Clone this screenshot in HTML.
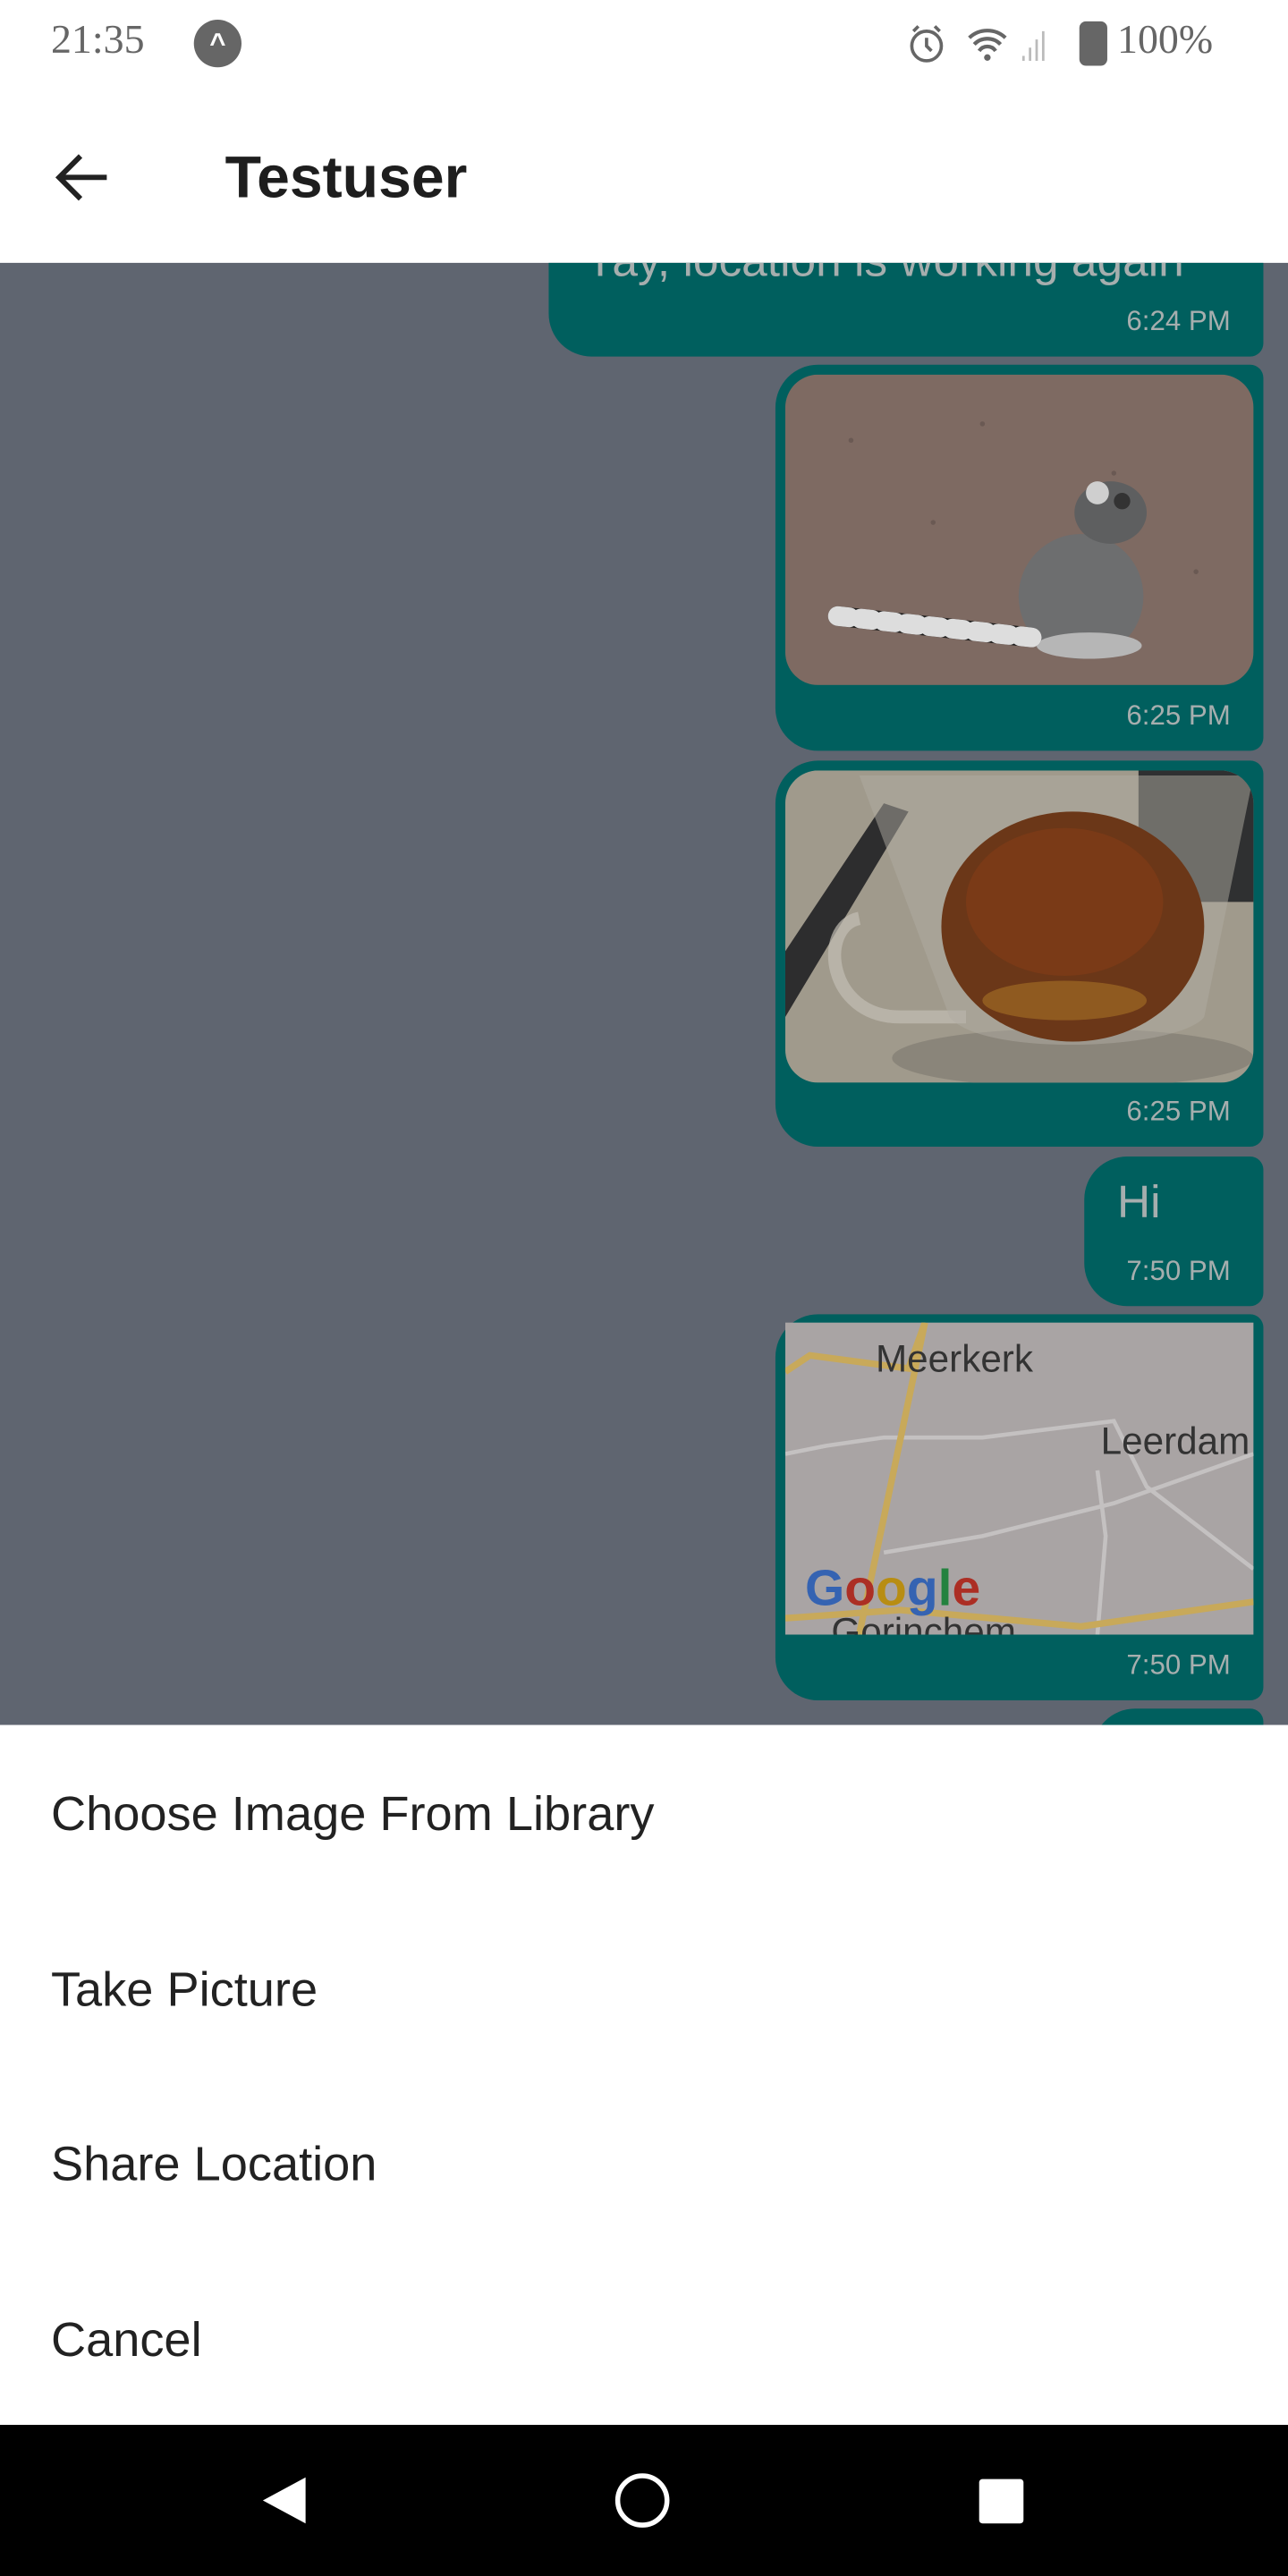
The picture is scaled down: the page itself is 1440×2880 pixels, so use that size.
<!DOCTYPE html>
<html><head><meta charset="utf-8"><style>
*{margin:0;padding:0;box-sizing:border-box}
html,body{width:1440px;height:2880px;overflow:hidden;background:#fff}
#w{position:absolute;left:0;top:0;width:784px;height:1568px;transform:scale(1.836735);transform-origin:0 0;font-family:"Liberation Sans",sans-serif}
.a{position:absolute}
.bub{position:absolute;background:#005f5e;border-radius:8px 8px 8px 26px}
.ts{position:absolute;right:20px;color:#a6aeae;font-size:17px}
.item{position:absolute;left:31px;font-size:29.5px;color:#222}
</style></head><body><div id="w">
<div class="a" style="left:0;top:0;width:784px;height:160px;background:#fff"></div>
<div class="a" style="left:31px;top:11px;font-family:'Liberation Serif',serif;font-size:25px;color:#666">21:35</div>
<div class="a" style="left:118px;top:12px;width:29px;height:29px;border-radius:50%;background:#666;color:#fff;font-size:17px;font-weight:bold;text-align:center;line-height:29px">^</div>
<svg class="a" style="left:550px;top:12px" width="100" height="30" viewBox="0 0 100 30">
<circle cx="14" cy="16" r="9" fill="none" stroke="#666" stroke-width="2"/><path d="M14 11v5l3 3" stroke="#666" stroke-width="2" fill="none"/><path d="M6 7l3-3M22 7l-3-3" stroke="#666" stroke-width="2"/>
<path d="M40 11a16 16 0 0 1 22 0M43 15a11 11 0 0 1 16 0M46 19a6 6 0 0 1 10 0" stroke="#666" stroke-width="2.3" fill="none"/><circle cx="51" cy="23" r="2" fill="#666"/>
<path d="M73 25v-3M77 25v-8M81 25v-13M85 25v-18" stroke="#bbb" stroke-width="1.5"/>
</svg>
<div class="a" style="left:657px;top:13px;width:17px;height:27px;border-radius:4px;background:#666"></div>
<div class="a" style="left:680px;top:11px;font-family:'Liberation Serif',serif;font-size:25px;color:#666">100%</div>
<svg class="a" style="left:33px;top:92px" width="34" height="32" viewBox="0 0 34 32"><path d="M32 16H4M16 3L3 16l13 13" stroke="#222" stroke-width="3.2" fill="none"/></svg>
<div class="a" style="left:137px;top:87px;font-size:36px;font-weight:bold;color:#1e1e1e">Testuser</div>

<div class="a" style="left:0;top:160px;width:784px;height:890px;background:#5f6570;overflow:hidden">
 <div class="bub" style="left:334px;top:-60px;width:435px;height:117px"><div class="a" style="left:22px;top:44px;font-size:28px;color:#a6aeae;white-space:nowrap;line-height:30px">Yay, location is working again</div><div class="ts" style="top:86px">6:24 PM</div></div>
 <div class="bub" style="left:472px;top:62px;width:297px;height:235px;border-radius:26px 8px 8px 26px">
  <svg class="a" style="left:6px;top:6px;border-radius:20px" width="285" height="189" viewBox="0 0 285 189">
   <rect width="285" height="189" fill="#7e6a62"/>
   <g fill="#5e4e49" opacity=".6"><circle cx="40" cy="40" r="1.5"/><circle cx="120" cy="30" r="1.5"/><circle cx="90" cy="90" r="1.5"/><circle cx="200" cy="60" r="1.5"/><circle cx="250" cy="120" r="1.5"/><circle cx="60" cy="150" r="1.5"/></g>
   <ellipse cx="180" cy="135" rx="38" ry="38" fill="#6d6e6f"/>
   <ellipse cx="198" cy="84" rx="22" ry="19" fill="#5e5f60"/>
   <circle cx="190" cy="72" r="7" fill="#cfcfcf"/><circle cx="205" cy="77" r="5" fill="#333"/>
   <ellipse cx="185" cy="165" rx="32" ry="8" fill="#b6b6b6"/>
   <g stroke-width="12" stroke-linecap="round">
    <path d="M32 147L150 160" stroke="#1c1c1c"/>
    <path d="M32 147L150 160" stroke="#ddd" stroke-dasharray="7 7"/>
   </g>
  </svg>
  <div class="ts" style="top:204px">6:25 PM</div>
 </div>
 <div class="bub" style="left:472px;top:303px;width:297px;height:235px;border-radius:26px 8px 8px 26px">
  <svg class="a" style="left:6px;top:6px;border-radius:20px" width="285" height="190" viewBox="0 0 285 190">
   <rect width="285" height="190" fill="#a09a8c"/>
   <path d="M0 110L60 20L75 25L0 150Z" fill="#2d2d2e"/>
   <rect x="215" y="0" width="70" height="80" fill="#2f3031"/>
   <ellipse cx="175" cy="175" rx="110" ry="18" fill="#8a857a"/>
   <path d="M45 90C20 95 25 150 70 150L110 150" stroke="#c2beb4" stroke-width="8" fill="none" opacity=".7"/>
   <path d="M45 3L285 3L255 150C240 170 120 175 100 150Z" fill="#b0aca2" opacity=".5"/>
   <ellipse cx="175" cy="95" rx="80" ry="70" fill="#6b3718"/>
   <ellipse cx="170" cy="80" rx="60" ry="45" fill="#7a3a17"/>
   <ellipse cx="170" cy="140" rx="50" ry="12" fill="#8f5a20"/>
  </svg>
  <div class="ts" style="top:204px">6:25 PM</div>
 </div>
 <div class="bub" style="left:660px;top:544px;width:109px;height:91px;border-radius:26px 8px 8px 26px"><div class="a" style="left:20px;top:12px;font-size:28px;color:#a6aeae">Hi</div><div class="ts" style="top:60px">7:50 PM</div></div>
 <div class="bub" style="left:472px;top:640px;width:297px;height:235px;border-radius:26px 8px 8px 26px">
  <svg class="a" style="left:6px;top:5px" width="285" height="190" viewBox="0 0 285 190">
   <rect width="285" height="190" fill="#a9a4a4"/>
   <g stroke="#c4c1c1" stroke-width="2.5" fill="none"><path d="M0 80L25 75L60 70L120 70L200 60L220 100L285 150"/><path d="M60 140L120 130L200 110L285 80"/><path d="M190 190L195 130L190 90"/></g>
   <path d="M0 30L15 20L75 28L85 0M0 180L70 175L180 185L285 170M85 0L45 190" stroke="#c8a95a" stroke-width="4" fill="none"/>
   <g font-family="Liberation Sans,sans-serif" font-size="23" fill="#333"><text x="55" y="30">Meerkerk</text><text x="192" y="80">Leerdam</text><text x="28" y="196">Gorinchem</text></g>
   <text x="12" y="172" font-family="Liberation Sans,sans-serif" font-size="31" font-weight="bold"><tspan fill="#3563b2">G</tspan><tspan fill="#ac2e24">o</tspan><tspan fill="#b88d12">o</tspan><tspan fill="#3563b2">g</tspan><tspan fill="#24823f">l</tspan><tspan fill="#ac2e24">e</tspan></text>
  </svg>
  <div class="ts" style="top:204px">7:50 PM</div>
 </div>
 <div class="bub" style="left:665px;top:880px;width:104px;height:60px;border-radius:26px 8px 8px 26px"></div>
</div>

<div class="a" style="left:0;top:1050px;width:784px;height:426px;background:#fff"></div>
<div class="item" style="top:1088px">Choose Image From Library</div>
<div class="item" style="top:1195px">Take Picture</div>
<div class="item" style="top:1301px">Share Location</div>
<div class="item" style="top:1408px">Cancel</div>

<div class="a" style="left:0;top:1476px;width:784px;height:92px;background:#000"></div>
<svg class="a" style="left:0;top:1476px" width="784" height="92"><path d="M186 32v28l-26-14z" fill="#fff"/><circle cx="391" cy="46" r="15" fill="none" stroke="#fff" stroke-width="3"/><rect x="596" y="33" width="27" height="27" rx="2" fill="#fff"/></svg>
</div></body></html>
